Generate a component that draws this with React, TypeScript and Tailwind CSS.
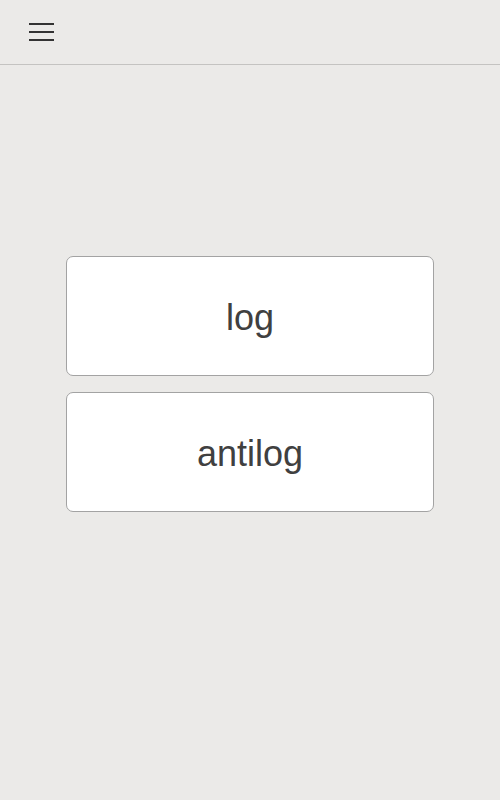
export default function App() {
  const items = ["log", "antilog"];

  return (
    <div className="min-h-[800px] w-full bg-[#ebeae8] font-['Liberation_Sans',Arial,sans-serif]">
      <header className="flex h-[65px] items-center border-b border-[#c4c3c1] px-[29px]">
        <button className="flex h-[18px] w-[25px] flex-col justify-between" aria-label="menu">
          <span className="block h-[2px] w-full bg-[#333333]" />
          <span className="block h-[2px] w-full bg-[#333333]" />
          <span className="block h-[2px] w-full bg-[#333333]" />
        </button>
      </header>

      <main className="flex flex-col items-center gap-4 pt-[191px]">
        {items.map((item) => (
          <button
            key={item}
            className="flex h-[120px] w-[368px] items-center justify-center rounded-[7px] border border-[#a3a3a3] bg-white pt-1 text-[36px] text-[#404040]"
          >
            {item}
          </button>
        ))}
      </main>
    </div>
  );
}
